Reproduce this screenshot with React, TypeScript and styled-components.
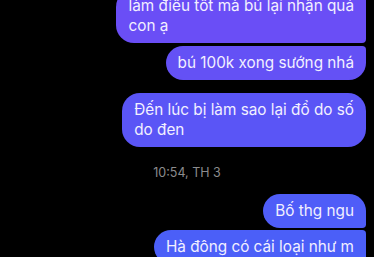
import styled, { createGlobalStyle } from "styled-components"

const GlobalStyle = createGlobalStyle`
    html, body {
        margin: 0;
        padding: 0;
        background: #000;
        overflow: hidden;
    }
`

type Msg = { lines: string[]; color: string; tr: number; br: number; gap: number }

const earlier: Msg[] = [
    { lines: ["làm điều tốt mà bú lại nhận quả", "con ạ"], color: "#6a4ef6", tr: 4, br: 4, gap: 0 },
    { lines: ["bú 100k xong sướng nhá"], color: "#6451f5", tr: 4, br: 18, gap: 3 },
    { lines: ["Đến lúc bị làm sao lại đổ do số", "do đen"], color: "#5a55f6", tr: 18, br: 18, gap: 13 },
]

const later: Msg[] = [
    { lines: ["Bố thg ngu"], color: "#4f5df8", tr: 18, br: 4, gap: 0 },
    { lines: ["Hà đông có cái loại như m"], color: "#4b5ff8", tr: 4, br: 4, gap: 2 },
]

const Message = ({ m }: { m: Msg }) => (
    <Bubble $color={m.color} $tr={m.tr} $br={m.br} $gap={m.gap}>
        {m.lines.map((l, j) => (
            <span key={j}>
                {l}
                {j < m.lines.length - 1 && <br />}
            </span>
        ))}
    </Bubble>
)

export default function App() {
    return (
        <>
            <GlobalStyle />
            <Thread>
                {earlier.map((m, i) => (
                    <Message key={i} m={m} />
                ))}
                <Stamp>10:54, TH 3</Stamp>
                {later.map((m, i) => (
                    <Message key={i} m={m} />
                ))}
            </Thread>
        </>
    )
}

const Thread = styled.div`
    display: flex;
    flex-direction: column;
    align-items: flex-end;
    padding: 0 8px 0 0;
    margin-top: -11px;
    height: 268px;
    overflow: hidden;
    font-family: "Inter", "Liberation Sans", sans-serif;
`

const Bubble = styled.div<{ $color: string; $tr: number; $br: number; $gap: number }>`
    background: ${(p) => p.$color};
    color: #f2f0ff;
    font-size: 15.3px;
    line-height: 20px;
    padding: 7px 12px;
    margin-top: ${(p) => p.$gap}px;
    border-radius: 18px ${(p) => p.$tr}px ${(p) => p.$br}px 18px;
    white-space: nowrap;
`

const Stamp = styled.div`
    align-self: center;
    margin: 18px 0 13px 8px;
    color: #8c8c8e;
    font-size: 12.5px;
    line-height: 16px;
`
